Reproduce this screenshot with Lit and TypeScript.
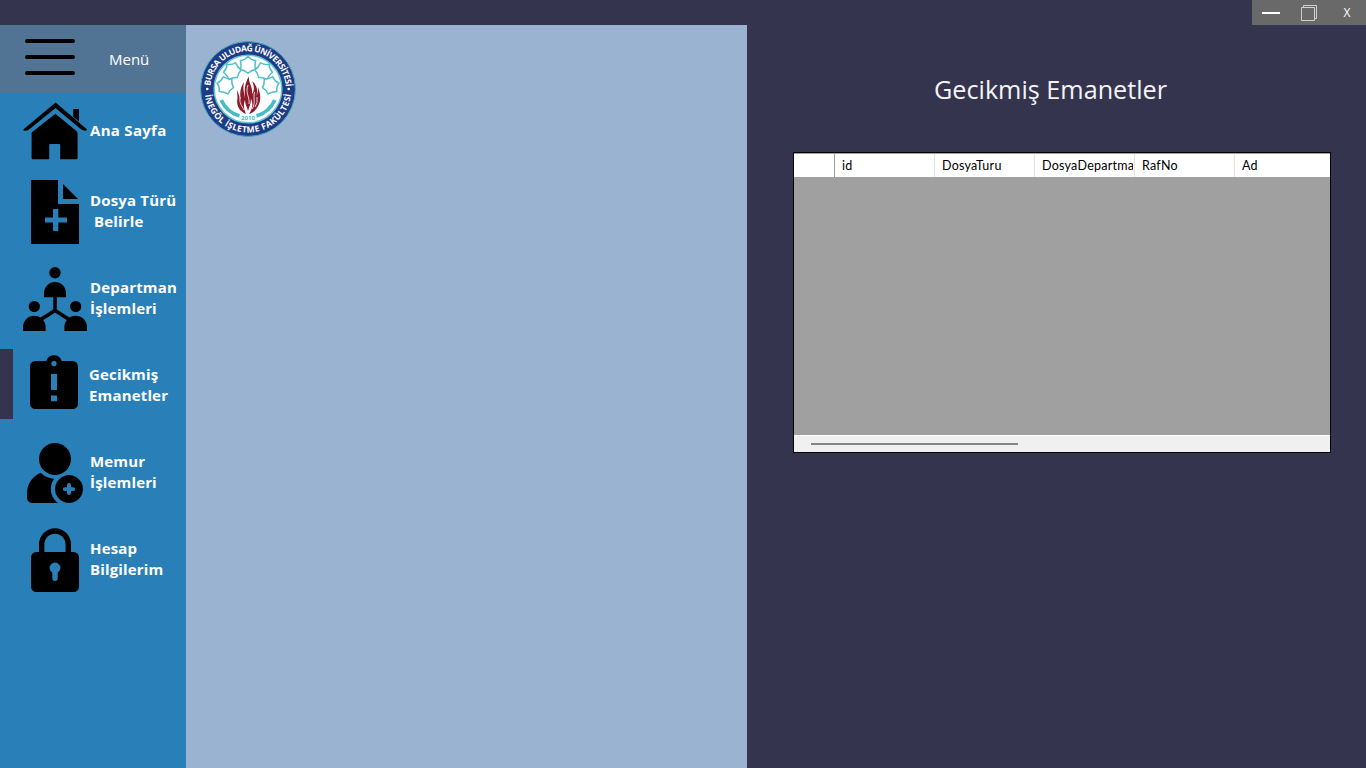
import { LitElement, html, svg, css, type SVGTemplateResult } from "lit";
import { customElement, property } from "lit/decorators.js";

const home = svg`
  <path d="M.6 30.300Q-.3 31.900 2.600 31.800 5 31.700 7 29.800L32.500 9 57 29.600Q59.500 31.700 61.800 31.700 65 31.600 63.300 29.700L32.600 3.600Z"/>
  <path d="M50.200 10H56V22.500L50.200 17.700Z"/>
  <path d="M32.400 14.700 53.400 32Q54.600 33.100 54.600 34.500V58.800Q54.600 60.300 53 60.300H37.200V46Q37.200 45 36.200 45H27.200Q26.200 45 26.200 46V60.300H10Q8.600 60.300 8.600 58.800V33.500Z"/>`;
const file = svg`
  <path fill-rule="evenodd" d="M8 0H35V24H56V64H8ZM30 29V37.500H22V42.500H30V51H35.300V42.500H44V37.500H35.300V29Z"/>
  <path d="M40 4 55 19H40Z"/>`;
const team = svg`
  <circle cx="32" cy="5.700" r="5.700"/>
  <path d="M21 30.200V26a11 11 0 0 1 22 0V30.200Z"/>
  <circle cx="11.300" cy="39.500" r="5.600"/><circle cx="52.700" cy="39.500" r="5.600"/>
  <path d="M0 64V60a11.300 11.300 0 0 1 22.600 0V64ZM41.400 64V60a11.300 11.300 0 0 1 22.600 0V64Z"/>
  <path d="M32 29V43.500M17 53 32 43.500 47 53" fill="none" stroke="#000" stroke-width="3.600"/>`;
const clipboard = svg`
  <path fill-rule="evenodd" d="M12.300 7H23.300a8 8 0 0 1 15.400 0H49.700a5.300 5.300 0 0 1 5.300 5.300V49.700a5.300 5.300 0 0 1-5.300 5.300H12.300A5.300 5.300 0 0 1 7 49.700V12.300A5.300 5.300 0 0 1 12.300 7ZM31 7a2.700 2.700 0 1 0 .01 0ZM28 20V36H34V20ZM28 41.500V47.300H34V41.500Z"/>`;
const user = svg`
  <circle cx="32" cy="18" r="16"/>
  <path d="M17.800 31.800C22 36 27 37.500 31.200 37.700A17.300 17.300 0 0 0 35 62H9A5 5 0 0 1 4 57V53C4 43 9 35.500 17.800 31.800Z"/>
  <path fill-rule="evenodd" d="M46 34a14 14 0 1 0 .01 0ZM46 42a2 2 0 0 1 2 2V46.200H50.200a1.900 1.900 0 0 1 0 3.800H48V52a2 2 0 0 1-4 0V50H41.800a1.900 1.900 0 0 1 0-3.800H44V44a2 2 0 0 1 2-2Z"/>`;
const lock = svg`
  <path d="M18.700 26V16.300a13.300 13.300 0 0 1 26.600 0V26" fill="none" stroke="#000" stroke-width="5.400"/>
  <path fill-rule="evenodd" d="M13.300 24H50.700A5.300 5.300 0 0 1 56 29.300V58.700A5.300 5.300 0 0 1 50.700 64H13.300A5.300 5.300 0 0 1 8 58.700V29.300A5.300 5.300 0 0 1 13.300 24ZM29.300 44.600V50.300a2.700 2.700 0 0 0 5.400 0V44.600A5.400 5.400 0 1 0 29.300 44.600Z"/>`;

interface Item { label: string; icon: SVGTemplateResult; active?: boolean; }

const items: Item[] = [
  { label: "Ana Sayfa", icon: home },
  { label: "Dosya Türü\n Belirle", icon: file },
  { label: "Departman\nİşlemleri", icon: team },
  { label: "Gecikmiş\nEmanetler", icon: clipboard, active: true },
  { label: "Memur\nİşlemleri", icon: user },
  { label: "Hesap\nBilgilerim", icon: lock },
];

@customElement("faculty-seal")
class FacultySeal extends LitElement {
  static styles = css`
    :host { display: block; width: 96px; height: 96px; }
    svg { display: block; }
    .ring { font: 700 8.500px "Open Sans", "Noto Sans", sans-serif; fill: #fff; }
    .year { font: 700 6px "Open Sans", "Noto Sans", sans-serif; fill: #45bcc6; }
  `;
  render() {
    const petal = "M0-8.600C2-6 4.500-4.800 7.600-4.400 6.800-1 6.800 2 7.600 4.600 5 5 2 6.500 0 8.300-2 6.500-5 5-7.600 4.600-6.800 2-6.800-1-7.600-4.400-4.500-4.800-2-6 0-8.600Z";
    const spots = [[-22.600, -3.600, -75], [-15.800, -18, -38], [0, -24, 0], [15.800, -18, 38], [22.600, -3.600, 75]];
    return html`<svg width="96" height="96" viewBox="-48 -48 96 96">
      <circle r="47.400" fill="#1d3c87" stroke="#46a8bd" stroke-width="1"/>
      <circle r="33.800" fill="#fff" stroke="#64c7cf" stroke-width="1.500"/>
      ${spots.map(([x, y, r]) => svg`<path d=${petal} transform="translate(${x} ${y}) rotate(${r})" fill="#fff" stroke="#4fc0c9" stroke-width="1.500"/>`)}
      <path d="M-26.800 11A29 29 0 0 0-8.500 27M26.800 11A29 29 0 0 1 8.500 27" fill="none" stroke="#45bcc6" stroke-width="3.600"/>
      <path fill="#8b1d2c" d="M-2 25C-9 22-12 16-10.500 9L-11 1C-9 5-9 8-7 11-9 4-7-3-4-7-5.500-1-4 4-3 9-4 0-3-6 1-13 0-6 5-3 4 5 7 1 6-4 4-8 9-4 10 1 8.500 7 10 4 10 1 10-2 13 6 13 12 10 17 8 21 5 24 1 25 5 19 5 14 3 10 3 15 1 18 0 22-1 18-3 15-3 11-5 16-4 20-2 25Z"/>
      <path fill="none" stroke="#fff" stroke-width=".8" d="M-8 8C-9 14-6 17-4 21M0-4C-3 4 2 8 1 15M6.500 3C5 8 8 15 4 20M9 8Q10 14 7 18"/>
      <text class="year" x="0" y="30.500" text-anchor="middle" textLength="14">2010</text>
      <defs>
        <path id="top" d="M-37.700 0A37.700 37.700 0 0 1 37.700 0"/>
        <path id="bottom" d="M-43.500 0A43.500 43.500 0 0 0 43.500 0"/>
      </defs>
      <text class="ring"><textPath href="#top" startOffset="3" textLength="113">BURSA ULUDAĞ ÜNİVERSİTESİ</textPath></text>
      <text class="ring"><textPath href="#bottom" startOffset="6" textLength="125">İNEGÖL İŞLETME FAKÜLTESİ</textPath></text>
      <circle cx="-40.700" cy="0" r="1.300" fill="#fff"/><circle cx="40.700" cy="0" r="1.300" fill="#fff"/>
    </svg>`;
  }
}

@customElement("side-item")
class SideItem extends LitElement {
  @property({ attribute: false }) item!: Item;
  static styles = css`
    :host { display: flex; height: 87px; align-items: flex-start; }
    .marker { width: 13px; height: 70px; margin: -5px 10px 0 0; flex: none; }
    .marker.on { background: #34344e; }
    svg { flex: none; }
    .label { margin: 10px 0 0 3px; white-space: pre; color: #fff; font: 700 15px/21px "Open Sans", "Noto Sans", sans-serif; letter-spacing: .16px; }
    .label.single { margin-top: 21px; letter-spacing: .3px; }
    .label.on { margin-left: 2px; }
  `;
  render() {
    const { label, icon, active } = this.item;
    const single = !label.includes("\n");
    return html`<div class="marker ${active ? "on" : ""}"></div>
      <svg width="64" height="64" viewBox="0 0 64 64">${icon}</svg>
      <div class="label ${single ? "single" : ""} ${active ? "on" : ""}">${label}</div>`;
  }
}

@customElement("app-root")
class AppRoot extends LitElement {
  static styles = css`
    :host { display: flex; flex-direction: column; width: 1366px; height: 768px; overflow: hidden; background: #34344e; font-family: "Open Sans", "Noto Sans", sans-serif; }
    .titlebar { display: flex; justify-content: flex-end; height: 25px; flex: none; }
    .controls { display: grid; grid-template-columns: 38px 38px 38px; width: 114px; background: #696969; }
    .controls svg { display: block; }
    .close { color: #fff; text-align: center; font: 12px/25px "Open Sans", sans-serif; }
    .body { display: grid; grid-template-columns: 186px 561px 1fr; flex: 1; }
    .side { background: #2980b9; }
    .menu { display: flex; height: 68px; background: #527494; color: #fff; font-size: 15px; }
    .menu span { margin: 24px 0 0 34px; line-height: 21px; }
    .menu svg { margin: 12px 0 0 25px; }
    .list { display: flex; flex-direction: column; padding-top: 6px; }
    .list side-item:first-child { height: 81px; }
    .middle { background: #9ab3d1; padding: 16px 0 0 14px; }
    .right { padding: 44px 35px 0 46px; }
    h1 { margin: 0 0 0 141px; font-weight: 400; font-size: 25.200px; line-height: 40px; color: #f4f4f6; white-space: nowrap; }
    .grid { box-sizing: border-box; width: 538px; height: 301px; margin-top: 43px; border: 1px solid #000; background: #a0a0a0; display: flex; flex-direction: column; overflow: hidden; }
    .head { display: grid; grid-template-columns: 41px 100px 100px 100px 100px 95px; height: 24px; border-top: 1px solid #a0a0a0; box-sizing: border-box; background: #fff; flex: none; font: 12.500px/24px Lato, sans-serif; color: #000; }
    .cell { box-sizing: border-box; border-right: 1px solid #e2e2e2; overflow: hidden; }
    .cell p { margin: 0 1px 0 7px; overflow: hidden; white-space: nowrap; letter-spacing: .25px; }
    .cell.first { border-right-color: #a0a0a0; }
    .cell:last-child { border-right: 0; }
    .rows { flex: 1; }
    .scroll { box-sizing: border-box; height: 17px; flex: none; border-top: 1px solid #fff; background: #f0f0f0; padding: 7px 0 0 17px; }
    .thumb { width: 207px; height: 2px; background: #858585; }
  `;
  render() {
    return html`
      <div class="titlebar"><div class="controls">
        <svg width="38" height="25"><path d="M10 13H28" stroke="#fff" stroke-width="2"/></svg>
        <svg width="38" height="25" fill="none" stroke="#d0d0d0"><path d="M11.500 7.500H24.500V20.500H11.500ZM13.500 7V5.500H26.500V18.500H25"/></svg>
        <div class="close">X</div>
      </div></div>
      <div class="body">
        <nav class="side">
          <div class="menu">
            <svg width="50" height="40"><path d="M2 4H48M2 20H48M2 36H48" stroke="#000" stroke-width="4" stroke-linecap="round"/></svg>
            <span>Menü</span>
          </div>
          <div class="list">${items.map((i) => html`<side-item .item=${i}></side-item>`)}</div>
        </nav>
        <main class="middle"><faculty-seal></faculty-seal></main>
        <section class="right">
          <h1>Gecikmiş Emanetler</h1>
          <div class="grid">
            <div class="head">
              <div class="cell first"></div>
              ${["id", "DosyaTuru", "DosyaDepartmani", "RafNo", "Ad"].map((c) => html`<div class="cell"><p>${c}</p></div>`)}
            </div>
            <div class="rows"></div>
            <div class="scroll"><div class="thumb"></div></div>
          </div>
        </section>
      </div>`;
  }
}
